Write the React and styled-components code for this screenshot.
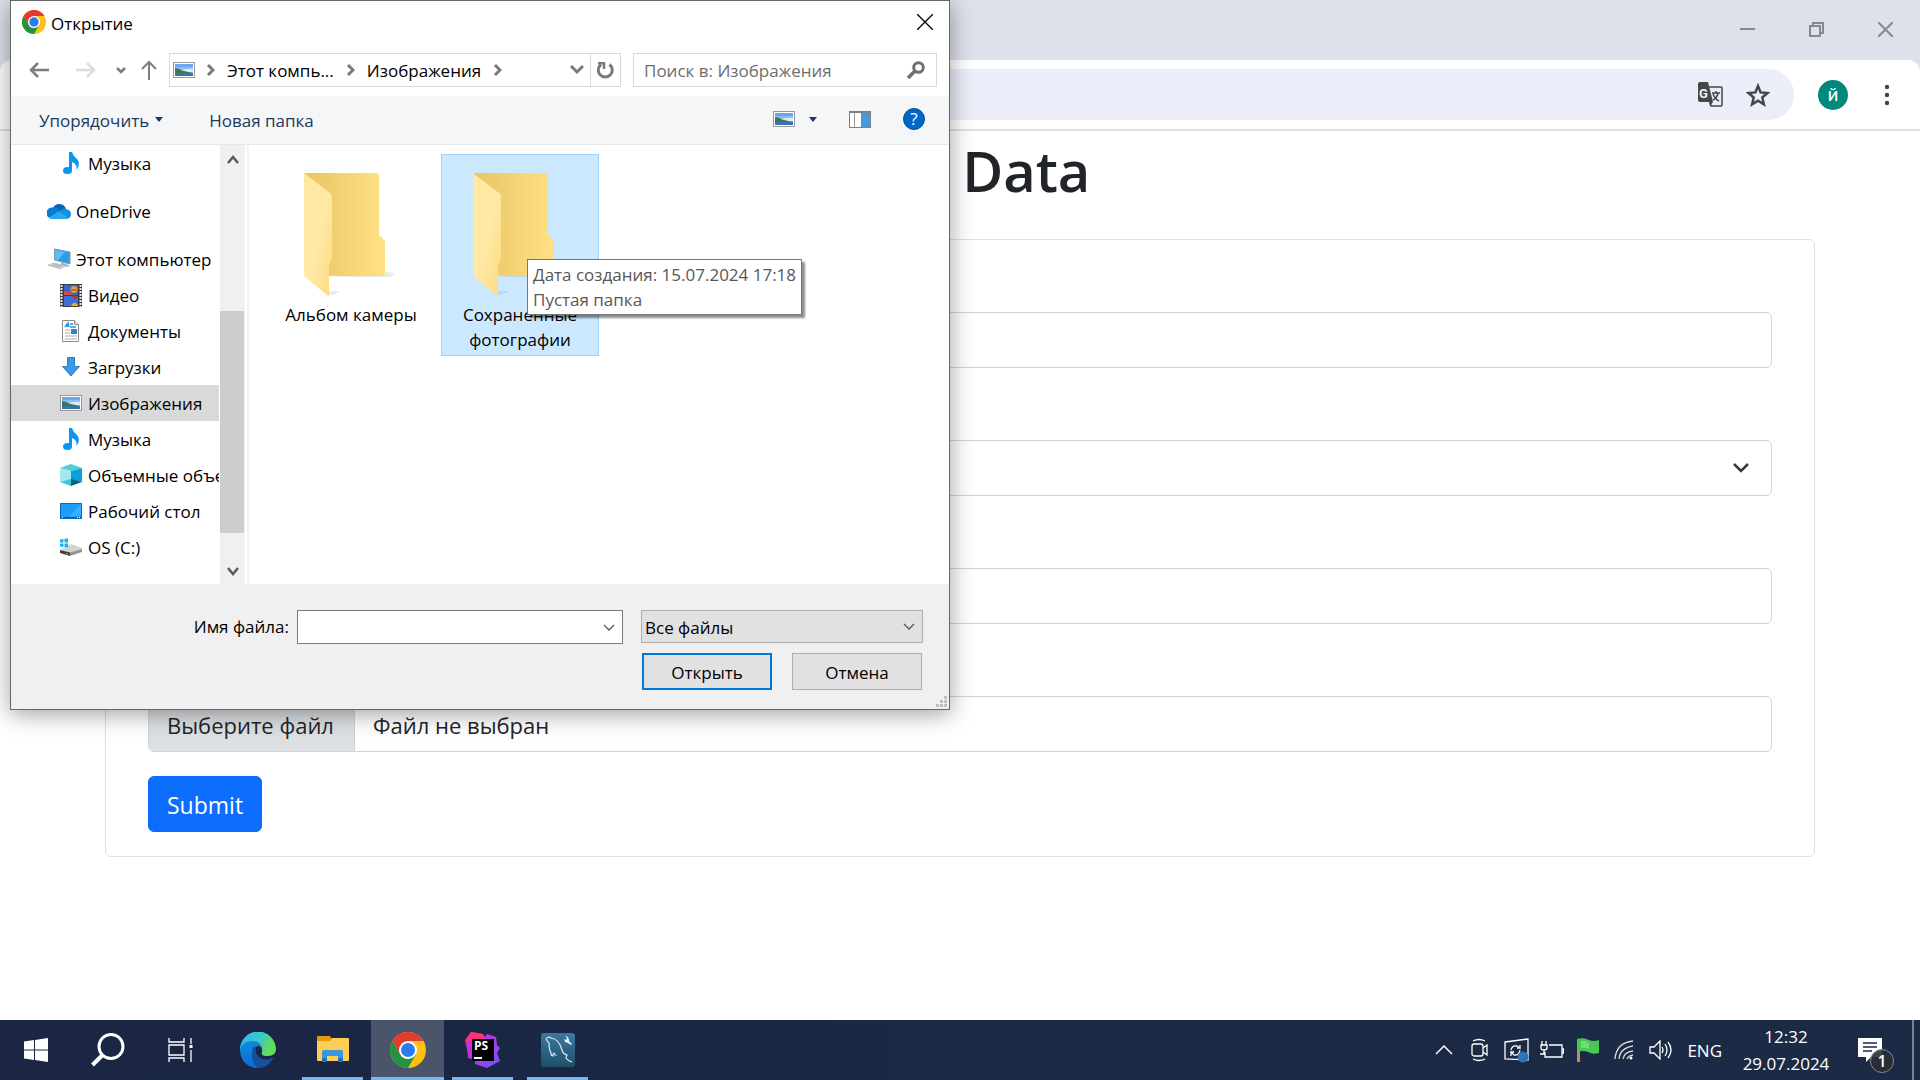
import React from "react";
import styled, { createGlobalStyle, css } from "styled-components";

const uiFont = `"Open Sans", "Noto Sans", sans-serif`;

const GlobalStyle = createGlobalStyle`
  *, *::before, *::after { box-sizing: border-box; }
  body { margin: 0; background: #fff; font-family: ${uiFont}; }
  button, input, select { font: inherit; color: inherit; margin: 0; }
  button { cursor: pointer; }
  svg { display: block; flex: none; }
`;

const plainButton = css`
  border: 0;
  padding: 0;
  background: none;
  display: flex;
  align-items: center;
  justify-content: center;
`;

const Desktop = styled.div`
  position: relative;
  display: flex;
  flex-direction: column;
  min-height: 100vh;
  overflow: hidden;
`;

/* ---------- browser ---------- */

const TabStrip = styled.header`
  height: 60px;
  display: flex;
  justify-content: flex-end;
  padding-bottom: 2px;
  background: #dee1e9;
`;

const WindowControl = styled.button`
  ${plainButton}
  width: 69px;
  color: #86888c;
`;

const ToolbarBack = styled.div`
  background: #dee1e9;
`;

const BrowserToolbar = styled.div`
  display: flex;
  align-items: center;
  gap: 24px;
  height: 71px;
  padding: 0 18px 0 240px;
  background: #fff;
  border-bottom: 2px solid #e0e1e2;
  border-radius: 12px 12px 0 0;
`;

const Omnibox = styled.div`
  flex: 1;
  height: 51px;
  display: flex;
  align-items: center;
  justify-content: flex-end;
  gap: 23px;
  padding-right: 24px;
  border-radius: 26px;
  background: #ebeef8;
`;

const IconButton = styled.button`
  ${plainButton}
  color: ${(p) => p.$color || "#444746"};
`;

const Avatar = styled.button`
  ${plainButton}
  width: 30px;
  height: 30px;
  border-radius: 50%;
  background: #00897b;
  color: #fff;
  font: 19px Roboto, sans-serif;
`;

const MenuButton = styled(IconButton)`
  width: 30px;
`;

const Page = styled.main`
  flex: 1;
  padding: 4px 105px 0;
  color: #212529;
`;

const PageTitle = styled.h1`
  margin: 0 0 34px;
  font-size: 56px;
  line-height: 70px;
  font-weight: 600;
  text-align: center;
`;

const Card = styled.form`
  display: flex;
  flex-direction: column;
  align-items: stretch;
  gap: 72px;
  padding: 72px 42px 24px;
  border: 1px solid #dfdfdf;
  border-radius: 6px;
  font-size: 23px;
`;

const FieldBox = styled.input`
  width: 100%;
  height: 56px;
  padding: 0 18px;
  border: 1px solid #ced4da;
  border-radius: 6px;
  background: #fff;
`;

const SelectWrap = styled.div`
  display: grid;
  align-items: center;
  & > * { grid-area: 1 / 1; }
  & > svg { justify-self: end; margin-right: ${(p) => p.$inset}px; pointer-events: none; }
`;

const FieldSelect = styled(FieldBox).attrs({ as: "select" })`
  appearance: none;
`;

const FileField = styled.label`
  display: flex;
  height: 56px;
  overflow: hidden;
  border: 1px solid #ced4da;
  border-radius: 6px;
  font-size: 22px;
`;

const HiddenFile = styled.input`
  width: 0;
  height: 0;
  opacity: 0;
  padding: 0;
  border: 0;
`;

const FileButton = styled.span`
  padding: 3px 20px 0 18px;
  border-right: 1px solid #ced4da;
  background: #dde0e3;
  line-height: 51px;
`;

const FileStatus = styled.span`
  padding: 3px 18px 0;
  line-height: 51px;
`;

const Submit = styled.button`
  align-self: flex-start;
  height: 56px;
  margin-top: -48px;
  padding: 2px 18px 0;
  border: 1px solid #0d6efd;
  border-radius: 6px;
  background: #0d6efd;
  color: #fff;
`;

/* ---------- file dialog ---------- */

const Dialog = styled.section`
  position: absolute;
  left: 10px;
  top: 0;
  width: 940px;
  display: flex;
  flex-direction: column;
  border: 1px solid #646668;
  background: #fff;
  color: #000;
  font-size: 17px;
  box-shadow: 0 4px 22px rgba(0, 0, 0, 0.38);
`;

const TitleBar = styled.div`
  display: flex;
  align-items: center;
  gap: 5px;
  height: 45px;
  padding: 0 16px 3px 11px;
`;

const DialogTitle = styled.h2`
  flex: 1;
  margin: 0;
  padding-top: 3px;
  font-size: 17px;
  font-weight: 400;
  line-height: 24px;
`;

const NavBar = styled.div`
  display: flex;
  align-items: center;
  height: 50px;
  padding: 0 12px 2px 18px;
`;

const NavButtons = styled.div`
  display: flex;
  align-items: center;
  width: 140px;
  justify-content: space-between;
  padding-right: 12px;
`;

const AddressBar = styled.div`
  display: flex;
  align-items: center;
  width: 452px;
  height: 34px;
  padding-left: 3px;
  border: 1px solid #d9d9d9;
`;

const Crumb = styled.button`
  ${plainButton}
  padding: 1px 12px 0;
`;

const Chevron = styled.span`
  display: flex;
  margin-left: ${(p) => p.$space || 0}px;
`;

const AddressEnd = styled.div`
  display: flex;
  align-self: stretch;
  align-items: center;
  margin-left: auto;
`;

const Refresh = styled.button`
  ${plainButton}
  align-self: stretch;
  width: 30px;
  margin-left: 6px;
  border-left: 1px solid #d9d9d9;
`;

const SearchBox = styled.label`
  flex: 1;
  display: flex;
  align-items: center;
  height: 34px;
  margin-left: 12px;
  padding: 0 11px 0 10px;
  border: 1px solid #d9d9d9;
`;

const SearchInput = styled.input`
  flex: 1;
  min-width: 0;
  border: 0;
  padding: 1px 0 0;
  outline: 0;
  background: none;
  &::placeholder { color: #6d6d6d; opacity: 1; }
`;

const CommandBar = styled.div`
  display: flex;
  align-items: center;
  height: 49px;
  padding: 0 24px 2px 28px;
  background: #f4f6f8;
  border-bottom: 1px solid #e6e8ea;
  color: #1e395b;
`;

const Command = styled.button`
  ${plainButton}
  gap: 6px;
  margin-right: 46px;
  & > span { padding-top: 2px; }
`;

const CommandIcons = styled.div`
  display: flex;
  align-items: center;
  gap: 32px;
  margin-left: auto;
`;

const ViewButton = styled.button`
  ${plainButton}
  gap: 14px;
`;

const Help = styled.button`
  ${plainButton}
  width: 22px;
  height: 22px;
  border: 1px solid #0a4b91;
  border-radius: 50%;
  background: #0067c8;
  color: #fff;
  font-size: 17px;
  line-height: 20px;
`;

const Browse = styled.div`
  display: flex;
  height: 439px;
`;

const Tree = styled.ul`
  width: 208px;
  margin: 0;
  padding: 0;
  overflow: hidden;
  list-style: none;
`;

const TreeItem = styled.li`
  margin-top: ${(p) => (p.$spaced ? 12 : 0)}px;
`;

const TreeButton = styled.button`
  ${plainButton}
  justify-content: flex-start;
  width: 208px;
  height: 36px;
  gap: ${(p) => (p.$root ? 5 : 6)}px;
  padding-left: ${(p) => (p.$root ? 36 : 49)}px;
  background: ${(p) => (p.$selected ? "#d9d9d9" : "transparent")};
  white-space: nowrap;
`;

const ScrollBar = styled.div`
  display: flex;
  flex-direction: column;
  align-items: center;
  justify-content: space-between;
  width: 25px;
  margin-left: 1px;
  padding: 10px 0 8px;
  background: #f0f0f0;
`;

const ScrollThumb = styled.div`
  align-self: stretch;
  height: 222px;
  margin: 112px 1px 0 0;
  background: #cdcdcd;
`;

const FileArea = styled.div`
  flex: 1;
  display: flex;
  align-items: flex-start;
  gap: 11px;
  margin-left: 2px;
  padding: 9px 23px;
  border-left: 2px solid #f2f2f2;
`;

const FileTile = styled.button`
  ${plainButton}
  flex-direction: column;
  width: 158px;
  height: 202px;
  justify-content: flex-start;
  padding: 17px 8px 0;
  border: 1px solid ${(p) => (p.$selected ? "#99d1ff" : "transparent")};
  background: ${(p) => (p.$selected ? "#cce8ff" : "transparent")};
  line-height: 25px;
`;

const Tooltip = styled.div`
  position: absolute;
  left: 516px;
  top: 258px;
  padding: 2px 5px;
  border: 1px solid #767676;
  background: #fff;
  box-shadow: 3px 3px 2px rgba(0, 0, 0, 0.45);
  color: #575757;
  line-height: 25px;
  white-space: nowrap;
`;

const DialogFooter = styled.div`
  position: relative;
  display: grid;
  grid-template-columns: 278px 326px 282px;
  column-gap: 8px;
  row-gap: 9px;
  align-items: start;
  align-content: start;
  height: 125px;
  padding-top: 26px;
  background: #f0f0f0;
`;

const FileNameLabel = styled.label`
  line-height: 34px;
  text-align: right;
`;

const FileName = styled.input`
  height: 34px;
  width: 100%;
  border: 1px solid #7a7a7a;
  background: #fff;
  padding: 0 28px 0 4px;
`;

const TypeCell = styled(SelectWrap)`
  margin-left: 10px;
  width: 282px;
`;

const FileType = styled.select`
  appearance: none;
  height: 33px;
  padding: 1px 28px 0 3px;
  border: 1px solid #adadad;
  border-radius: 0;
  background: #e1e1e1;
`;

const Actions = styled.div`
  grid-column: 3;
  display: flex;
  gap: 20px;
  width: 282px;
  margin-left: 11px;
`;

const ActionButton = styled.button`
  width: 130px;
  height: 37px;
  padding: 1px 0 0;
  border: ${(p) => (p.$primary ? "2px solid #0078d7" : "1px solid #adadad")};
  background: #e1e1e1;
`;

const Grip = styled.svg`
  position: absolute;
  right: 2px;
  bottom: 2px;
`;

/* ---------- taskbar ---------- */

const Taskbar = styled.footer`
  display: flex;
  height: 60px;
  background: linear-gradient(90deg, #1a2644, #1c2b45);
  color: #fff;
`;

const SystemButton = styled.button`
  ${plainButton}
  width: 72px;
`;

const AppButtons = styled.div`
  display: flex;
  gap: 2px;
  margin-left: 5px;
`;

const AppButton = styled.button`
  ${plainButton}
  flex-direction: column;
  width: 73px;
  background: ${(p) => (p.$state === "active" ? "#4a546b" : "transparent")};
  & > span {
    flex: 1;
    display: flex;
    align-items: center;
    padding-top: 2px;
  }
  &::after {
    content: "";
    height: 3px;
    width: ${(p) => ({ active: 73, open: 61 })[p.$state] || 0}px;
    background: #76b9ed;
  }
`;

const Tray = styled.div`
  display: flex;
  align-items: center;
  margin-left: auto;
`;

const TrayIcons = styled.div`
  display: flex;
  align-items: center;
  gap: 12px;
  margin-right: 15px;
`;

const TrayButton = styled.button`
  ${plainButton}
  width: 24px;
  height: 32px;
`;

const Language = styled.button`
  ${plainButton}
  font-size: 17px;
`;

const Clock = styled.time`
  width: 128px;
  font-size: 17px;
  line-height: 27px;
  text-align: center;
`;

const Notifications = styled.button`
  ${plainButton}
  position: relative;
  width: 24px;
  height: 40px;
  margin: 0 30px 0 8px;
`;

const Badge = styled.span`
  position: absolute;
  left: 12px;
  top: 19px;
  width: 24px;
  height: 24px;
  border: 1px solid #85898f;
  border-radius: 50%;
  background: rgba(43, 46, 53, 0.9);
  font-size: 16px;
  font-weight: 600;
  line-height: 22px;
`;

const ShowDesktop = styled.button`
  ${plainButton}
  align-self: stretch;
  width: 8px;
  border-left: 2px solid #79828f;
`;

/* ---------- icons ---------- */

const ChromeIcon = ({ size }) => (
  <svg width={size} height={size} viewBox="0 0 36 36">
    <circle cx="18" cy="18" r="18" fill="#fbc116" />
    <path d="M18 18 2.400 9A18 18 0 0 1 33.600 9H18Z" fill="#e33b2e" />
    <path d="M2.400 9 10.200 22.500 18 18V9Z" fill="#e33b2e" />
    <path d="M2.400 9 10.200 22.500A9 9 0 0 0 18 27L25.800 22.500 18 36A18 18 0 0 1 2.400 9Z" fill="#229342" />
    <circle cx="18" cy="18" r="9" fill="#fff" />
    <circle cx="18" cy="18" r="7" fill="#2b7bee" />
  </svg>
);

const PictureIcon = () => (
  <svg width="22" height="16" viewBox="0 0 22 16">
    <rect x=".5" y=".5" width="21" height="15" fill="#fff" stroke="#9a9a9a" />
    <rect x="2" y="2" width="18" height="12" fill="#8fbdf3" />
    <rect x="2" y="2" width="18" height="3" fill="#6ea5ee" />
    <path d="M7 9q6-3 13-2v3H7Z" fill="#dcecf7" />
    <path d="M2 6q4 0 7 2.500 5 1 11 2.500H2Z" fill="#3f7455" />
    <rect x="2" y="11" width="18" height="3" fill="#3b73a6" />
  </svg>
);

const MusicIcon = () => (
  <svg width="22" height="24" viewBox="0 0 22 24">
    <ellipse cx="7.500" cy="19.500" rx="4.500" ry="3.500" fill="#0a95f2" />
    <path d="M9 1h3q1 4 5 7 4 5-.5 11 1-6-4.500-8v8l-3 1Z" fill="#0a95f2" />
  </svg>
);

const CloudIcon = () => (
  <svg width="24" height="16" viewBox="0 0 24 16">
    <path d="M6 5a7 7 0 0 1 13 1l-7 6-6-3Z" fill="#0862b8" />
    <path d="M6 4.500q4-1 7 2L4 15.500A5.500 5.500 0 0 1 6 4.500Z" fill="#0c78d4" />
    <path d="M13 7.500q3-3 6-1.500 5 1 5 5t-4 5H12Z" fill="#1590df" />
    <path d="M2 14.500 12 8l9 7q-1 1-3 1H5q-2 0-3-1.500Z" fill="#2aa8ee" />
  </svg>
);

const ComputerIcon = () => (
  <svg width="24" height="22" viewBox="0 0 24 22">
    <path d="M7.500 1 23 4v12L7.500 12Z" fill="#2f9ce6" stroke="#8299aa" />
    <path d="M8 2l10 2-7 8-3-.5Z" fill="#56c0f7" />
    <path d="M14 14v3l6 2 3-1-4-2Z" fill="#a9b4bd" />
    <path d="M1 17l6-2 11 3-5 3Z" fill="#d5dbe0" stroke="#a9b4bd" strokeWidth=".7" />
    <path d="M4 17l9 2M7 16l8 2" stroke="#8f9aa3" strokeWidth=".7" />
  </svg>
);

const VideoIcon = () => (
  <svg width="22" height="23" viewBox="0 0 22 23">
    <rect width="22" height="23" fill="#3c3c3c" />
    <path d="M1.500 1v22M20.500 1v22" stroke="#e8e8e8" strokeWidth="2" strokeDasharray="2 1" />
    <rect x="4" y="1" width="14" height="10" fill="#3b63d6" />
    <rect x="4" y="12" width="14" height="10" fill="#3b6fe0" />
    <path d="M4 8q4-2 6 1l2 2H4Z" fill="#e04a3a" />
    <circle cx="14" cy="5.500" r="3.500" fill="#e3a625" />
    <path d="M11 6h6M12 12h5l-2 3Z" stroke="#a1342a" fill="#d93a2d" strokeWidth="1" />
    <path d="M11 22q3-6 7-1v1Z" fill="#e3b625" />
  </svg>
);

const DocumentIcon = () => (
  <svg width="22" height="24" viewBox="0 0 22 24">
    <path d="M2.500 1.500h12l4 4v17h-16Z" fill="#fff" stroke="#8c8c8c" />
    <path d="M14.500 1.500v4h4" fill="#e8e8e8" stroke="#8c8c8c" />
    <path d="M5 8l3-4 1 4M6 7h3M10 5h3M10 8h6" stroke="#2492d8" fill="none" strokeWidth="1.500" />
    <path d="M5 11h5M5 14h5M5 17h12M5 20h12" stroke="#a8a8a8" />
    <rect x="11" y="10" width="6" height="5" fill="#3a7fc0" />
  </svg>
);

const DownloadIcon = () => (
  <svg width="22" height="20" viewBox="0 0 22 20">
    <path d="M7.500.5h7v9h5L11 19 2.500 9.500h5Z" fill="#3c99e8" stroke="#2f7fc6" />
  </svg>
);

const CubeIcon = () => (
  <svg width="22" height="22" viewBox="0 0 22 22">
    <path d="M0 4 11 0l11 4-11 3Z" fill="#51cdd8" />
    <path d="M0 4l11 3v9L0 18Z" fill="#a4e7ec" />
    <path d="M22 4 11 7v9l11 2Z" fill="#0aa2dc" />
    <path d="M0 18l11-3v7Z" fill="#3ec6d8" />
    <path d="M22 18l-11-3v7Z" fill="#08607a" />
  </svg>
);

const DesktopIcon = () => (
  <svg width="22" height="16" viewBox="0 0 22 16">
    <rect x=".5" y=".5" width="21" height="15" fill="#1c9dfb" stroke="#0d6cb0" />
    <path d="M21 1v11L9 14Z" fill="#3bb0ff" />
    <path d="M1 14.500h20" stroke="#0b5c9b" />
    <path d="M2 14.500h1M17 14.500h3" stroke="#fff" strokeDasharray="1 1" />
  </svg>
);

const DriveIcon = () => (
  <svg width="22" height="18" viewBox="0 0 22 18">
    <path d="M0 12l11-6 11 4v2l-12 3Z" fill="#d3d3d3" />
    <path d="M0 12l10 2.500V18L0 15Z" fill="#3f3f3f" />
    <path d="M10 14.500 22 11v3l-12 4Z" fill="#969696" />
    <path d="M6 15.500l2 .5" stroke="#5fd36a" />
    <path d="M0 1.500 3.500 1v3.500H0ZM4.500.8 8 .4v4.100H4.500ZM0 5.500h3.500V9L0 8.500ZM4.500 5.500H8v4l-3.500-.4Z" fill="#12b3f2" />
  </svg>
);

const FolderIcon = ({ id }) => (
  <svg width="94" height="130" viewBox="0 0 94 130">
    <defs>
      <linearGradient id={`${id}back`}>
        <stop offset="0" stopColor="#e8c464" />
        <stop offset="1" stopColor="#ffe184" />
      </linearGradient>
      <linearGradient id={`${id}front`} x2="1" y2="1">
        <stop offset="0" stopColor="#ffe8a0" />
        <stop offset=".5" stopColor="#ffe9a6" />
        <stop offset="1" stopColor="#fddc80" />
      </linearGradient>
    </defs>
    <path d="M27 105h60q4-3 3-4l-12-2ZM23 123q9 0 13-4H25Z" fill="#000" opacity=".08" />
    <path d="M0 1h73q2 0 2 2v60l6 6v33q0 2-2 2H24Z" fill={`url(#${id}back)`} />
    <path d="M0 1l26 20q2 1 2 4v61l-3 6v31q0 1-1 1L0 104Z" fill={`url(#${id}front)`} />
  </svg>
);

const SmallChevron = ({ d = "M2 1l5 5-5 5", width = 9, height = 12, stroke = "#7a7a7a", sw = 3 }) => (
  <svg width={width} height={height} viewBox={`0 0 ${width} ${height}`} fill="none" stroke={stroke} strokeWidth={sw}>
    <path d={d} />
  </svg>
);

const ThinDown = () => (
  <SmallChevron d="M1 2l5 5 5-5" width={12} height={9} stroke="#555" sw={1.3} />
);

const Triangle = () => (
  <svg width="8" height="5" viewBox="0 0 8 5"><path d="M0 0h8L4 5Z" fill="#1e395b" /></svg>
);

const Arrow = ({ color, flip }) => (
  <svg width="20" height="18" viewBox="0 0 20 18" fill="none" stroke={color} strokeWidth="2.500">
    <path d={flip ? "M0 9h18M11 2l7 7-7 7" : "M20 9H2M9 2 2 9l7 7"} />
  </svg>
);

const EdgeIcon = () => (
  <svg width="36" height="36" viewBox="0 0 36 36">
    <defs>
      <linearGradient id="edgeTop" x2="1" y2=".4">
        <stop offset="0" stopColor="#2fb4f0" />
        <stop offset=".5" stopColor="#35c6d6" />
        <stop offset="1" stopColor="#63dd58" />
      </linearGradient>
      <linearGradient id="edgeLeft" x2=".3" y2="1">
        <stop offset="0" stopColor="#0f8ce0" />
        <stop offset="1" stopColor="#0a6fd0" />
      </linearGradient>
    </defs>
    <path d="M0 18A18 18 0 0 1 36 17q0 7-8 7-8 0-6-4 1-7-6-9Q6 8 0 18Z" fill="url(#edgeTop)" />
    <path d="M0 18Q2 9 12 9q9 0 10 8-1-3-4-3-6 1-6 8 0 9 10 13Q18 36 15 36 1 33 0 18Z" fill="url(#edgeLeft)" />
    <path d="M12 20q0-5 5-6-3 5 1 10 6 6 14 2 2-1 1 1-6 9-15 9Q11 31 12 20Z" fill="#13519c" />
  </svg>
);

const ExplorerIcon = () => (
  <svg width="32" height="27" viewBox="0 0 32 27">
    <path d="M0 1q0-1 1-1h12l2 3-2 3H0Z" fill="#e09a0c" />
    <path d="M0 5h13l2-3h16q1 0 1 1v21q0 1-1 1H1q-1 0-1-1Z" fill="#fdcd55" />
    <path d="M5 16q0-2 2-2h17q2 0 2 2v10h-5v-6H10v6H5Z" fill="#3a96dd" />
    <path d="M5 22h5v4H5ZM21 22h5v4h-5Z" fill="#1d76bd" />
  </svg>
);

const PhpStormIcon = () => (
  <svg width="36" height="36" viewBox="0 0 36 36">
    <defs>
      <linearGradient id="storm" x2="1" y2="1">
        <stop offset="0" stopColor="#ff2f86" />
        <stop offset=".3" stopColor="#c333e0" />
        <stop offset="1" stopColor="#6b57ff" />
      </linearGradient>
    </defs>
    <path d="M0 8 6 0l12 2 2 3 2-3 9 3 1 8 3 3-3 5 3 8-13 7-12-4v-5l-6-1Z" fill="url(#storm)" />
    <path d="M6 0l12 2 1 6H7l-5 4-1-4Z" fill="#fb3377" />
    <path d="M2 9h5v18l-4-1Z" fill="#c92fd8" />
    <rect x="7" y="7" width="22" height="22" fill="#000" />
    <rect x="9" y="25" width="8" height="2" fill="#fff" />
    <text x="9" y="18" fill="#fff" fontSize="12" fontWeight="700" fontFamily="Open Sans, sans-serif">PS</text>
  </svg>
);

const WorkbenchIcon = () => (
  <svg width="34" height="34" viewBox="0 0 34 34" fill="none">
    <defs>
      <linearGradient id="bench" y2="1" x2="0">
        <stop offset="0" stopColor="#3a78a0" />
        <stop offset="1" stopColor="#1f5068" />
      </linearGradient>
    </defs>
    <rect width="34" height="34" rx="3" fill="url(#bench)" />
    <path d="M5 6q2-3 5-1 8 1 11 12 1 4 5 5-1 2-1 3 2 3 6 4M5 6q1 2 3 4 0 7 2 10 0 3 2 3 0-3 1-3 2 3 2 2" stroke="#dcebf3" strokeWidth="1.200" />
    <path d="M24 3l2 2-1 2-2-1 1 3 3 1 3 2 1-1-3-3q0-5-4-5Z" fill="#e6f1f6" />
  </svg>
);

const treeItems = [
  { label: "Музыка", icon: <MusicIcon /> },
  { label: "OneDrive", icon: <CloudIcon />, root: true },
  { label: "Этот компьютер", icon: <ComputerIcon />, root: true },
  { label: "Видео", icon: <VideoIcon /> },
  { label: "Документы", icon: <DocumentIcon /> },
  { label: "Загрузки", icon: <DownloadIcon /> },
  { label: "Изображения", icon: <PictureIcon />, selected: true },
  { label: "Музыка", icon: <MusicIcon /> },
  { label: "Объемные объекты", icon: <CubeIcon /> },
  { label: "Рабочий стол", icon: <DesktopIcon /> },
  { label: "OS (C:)", icon: <DriveIcon /> },
];

function BrowserWindow() {
  return (
    <>
      <TabStrip>
        <WindowControl aria-label="Minimize">
          <svg width="15" height="15" viewBox="0 0 15 15"><path d="M0 7h15" stroke="currentColor" strokeWidth="2" /></svg>
        </WindowControl>
        <WindowControl aria-label="Restore">
          <svg width="15" height="15" viewBox="0 0 15 15" fill="none" stroke="currentColor" strokeWidth="2">
            <path d="M1 4h10v10H1ZM4 4V1h10v10h-3" />
          </svg>
        </WindowControl>
        <WindowControl aria-label="Close window">
          <svg width="15" height="15" viewBox="0 0 15 15"><path d="M0 0l15 15M15 0 0 15" stroke="currentColor" strokeWidth="2" /></svg>
        </WindowControl>
      </TabStrip>
      <ToolbarBack>
        <BrowserToolbar>
          <Omnibox>
            <IconButton aria-label="Translate">
              <svg width="25" height="25" viewBox="0 0 25 25">
                <path d="M10 5h13q1 0 1 1v17q0 1-1 1H13l-1-4" fill="none" stroke="#444746" strokeWidth="1.500" />
                <path d="M2 0h8l5 20H2q-2 0-2-2V2q0-2 2-2ZM11 20h4l-3 4Z" fill="#444746" />
                <path d="M14 11h8M18 9v2M20 11q-1 5-5 7M15 12q2 5 6 7" fill="none" stroke="#444746" strokeWidth="1.500" />
                <text x="1" y="16" fill="#ebeef8" fontSize="13" fontWeight="700" fontFamily="Roboto, sans-serif">G</text>
              </svg>
            </IconButton>
            <IconButton aria-label="Bookmark">
              <svg width="24" height="24" viewBox="0 0 24 24" fill="none" stroke="currentColor" strokeWidth="2.500">
                <path d="M12 3l2.600 6.400 6.900.6-5.200 4.500 1.600 6.800L12 17.700l-5.900 3.600 1.600-6.800L2.500 10l6.900-.6Z" />
              </svg>
            </IconButton>
          </Omnibox>
          <Avatar aria-label="Profile">й</Avatar>
          <MenuButton aria-label="Menu">
            <svg width="6" height="22" viewBox="0 0 6 22" fill="currentColor">
              <circle cx="3" cy="3" r="2.200" /><circle cx="3" cy="11" r="2.200" /><circle cx="3" cy="19" r="2.200" />
            </svg>
          </MenuButton>
        </BrowserToolbar>
      </ToolbarBack>
      <Page>
        <PageTitle>Post Data</PageTitle>
        <Card onSubmit={(e) => e.preventDefault()}>
          <FieldBox aria-label="Name" />
          <SelectWrap $inset={23}>
            <FieldSelect aria-label="Category" />
            <SmallChevron d="M1 1l7 7 7-7" width={16} height={11} stroke="#343a40" sw={2.5} />
          </SelectWrap>
          <FieldBox aria-label="Price" />
          <FileField>
            <FileButton>Выберите файл</FileButton>
            <FileStatus>Файл не выбран</FileStatus>
            <HiddenFile type="file" />
          </FileField>
          <Submit>Submit</Submit>
        </Card>
      </Page>
    </>
  );
}

function FileDialog() {
  return (
    <Dialog role="dialog" aria-label="Открытие">
      <TitleBar>
        <ChromeIcon size={24} />
        <DialogTitle>Открытие</DialogTitle>
        <IconButton $color="#000" aria-label="Close">
          <svg width="16" height="16" viewBox="0 0 16 16"><path d="M0 0l16 16M16 0 0 16" stroke="currentColor" strokeWidth="1.300" /></svg>
        </IconButton>
      </TitleBar>
      <NavBar>
        <NavButtons>
          <IconButton aria-label="Back"><Arrow color="#7d7d7d" /></IconButton>
          <Chevron $space={12}><IconButton aria-label="Forward"><Arrow color="#dcdcdc" flip /></IconButton></Chevron>
          <Chevron $space={4}>
            <IconButton aria-label="Recent">
              <SmallChevron d="M1 1l4 4 4-4" width={10} height={7} sw={2.5} />
            </IconButton>
          </Chevron>
          <IconButton aria-label="Up">
            <svg width="16" height="20" viewBox="0 0 16 20" fill="none" stroke="#7d7d7d" strokeWidth="2"><path d="M8 20V2M1 9l7-7 7 7" /></svg>
          </IconButton>
        </NavButtons>
        <AddressBar>
          <PictureIcon />
          <Chevron $space={11}><SmallChevron /></Chevron>
          <Crumb>Этот компь...</Crumb>
          <SmallChevron />
          <Crumb>Изображения</Crumb>
          <SmallChevron />
          <AddressEnd>
            <SmallChevron d="M1 1l6 6 6-6" width={14} height={10} sw={3} />
            <Refresh aria-label="Refresh">
              <svg width="17" height="17" viewBox="0 0 17 17" fill="none" stroke="#7a7a7a" strokeWidth="3">
                <path d="M12.500 2.500a7 7 0 1 1-8.500 0" /><path d="M1 1.200h6V7" strokeWidth="2.500" />
              </svg>
            </Refresh>
          </AddressEnd>
        </AddressBar>
        <SearchBox>
          <SearchInput placeholder="Поиск в: Изображения" />
          <svg width="18" height="18" viewBox="0 0 18 18" fill="none" stroke="#6f6f6f">
            <circle cx="11.500" cy="6.500" r="4.800" strokeWidth="3" /><path d="M1 17l7-7" strokeWidth="3.500" />
          </svg>
        </SearchBox>
      </NavBar>
      <CommandBar>
        <Command><span>Упорядочить</span><Triangle /></Command>
        <Command><span>Новая папка</span></Command>
        <CommandIcons>
          <ViewButton aria-label="View"><PictureIcon /><Triangle /></ViewButton>
          <IconButton aria-label="Preview pane">
            <svg width="22" height="17" viewBox="0 0 22 17">
              <rect x=".5" y=".5" width="21" height="16" fill="#fff" stroke="#7f7f7f" />
              <path d="M0 1h22" stroke="#7f7f7f" strokeWidth="2" />
              <path d="M5.500 2v14" stroke="#9d9d9d" />
              <rect x="12" y="2" width="9" height="14" fill="#4199e1" />
            </svg>
          </IconButton>
          <Help aria-label="Help">?</Help>
        </CommandIcons>
      </CommandBar>
      <Browse>
        <Tree>
          {treeItems.map((item, i) => (
            <TreeItem key={i} $spaced={item.root}>
              <TreeButton $root={item.root} $selected={item.selected}>
                {item.icon}
                <span>{item.label}</span>
              </TreeButton>
            </TreeItem>
          ))}
        </Tree>
        <ScrollBar>
          <SmallChevron d="M1 8l5-6 5 6" width={12} height={9} stroke="#5a5a5a" sw={2.5} />
          <ScrollThumb />
          <SmallChevron d="M1 1l5 6 5-6" width={12} height={9} stroke="#5a5a5a" sw={2.5} />
        </ScrollBar>
        <FileArea>
          <FileTile><FolderIcon id="camera" />Альбом камеры</FileTile>
          <FileTile $selected><FolderIcon id="saved" />Сохраненные фотографии</FileTile>
        </FileArea>
      </Browse>
      <DialogFooter>
        <FileNameLabel htmlFor="file-name">Имя файла:</FileNameLabel>
        <SelectWrap $inset={8}>
          <FileName id="file-name" />
          <ThinDown />
        </SelectWrap>
        <TypeCell $inset={8}>
          <FileType aria-label="Тип файлов"><option>Все файлы</option></FileType>
          <ThinDown />
        </TypeCell>
        <Actions>
          <ActionButton $primary>Открыть</ActionButton>
          <ActionButton>Отмена</ActionButton>
        </Actions>
        <Grip width="11" height="11" viewBox="0 0 11 11" fill="#bfbfbf">
          <path d="M8 0h3v3H8ZM8 4h3v3H8ZM8 8h3v3H8ZM4 4h3v3H4ZM4 8h3v3H4ZM0 8h3v3H0Z" />
        </Grip>
      </DialogFooter>
      <Tooltip role="tooltip">
        <div>Дата создания: 15.07.2024 17:18</div>
        <div>Пустая папка</div>
      </Tooltip>
    </Dialog>
  );
}

function SystemTaskbar() {
  return (
    <Taskbar>
      <SystemButton aria-label="Start">
        <svg width="24" height="24" viewBox="0 0 24 24" fill="#fff">
          <path d="M0 3.500l10-1.400v9.400H0ZM11 2l13-2v11.500H11ZM0 12.500h10v9.400L0 20.500ZM11 12.500h13V24l-13-2Z" />
        </svg>
      </SystemButton>
      <SystemButton aria-label="Search">
        <svg width="34" height="34" viewBox="0 0 34 34" fill="none" stroke="#fff" strokeWidth="3">
          <circle cx="20" cy="13.500" r="12" /><path d="M11.500 22 1.500 32" strokeWidth="4" />
        </svg>
      </SystemButton>
      <SystemButton aria-label="Task view">
        <svg width="25" height="24" viewBox="0 0 25 24" fill="none" stroke="#fff" strokeWidth="1.300">
          <path d="M1 0v4h15V0M1 7h15v10H1ZM1 24v-4h15v4M23 0v6M23 12v12" /><path d="M21.500 7h3v3h-3Z" fill="#fff" stroke="none" />
        </svg>
      </SystemButton>
      <AppButtons>
        <AppButton aria-label="Edge"><span><EdgeIcon /></span></AppButton>
        <AppButton $state="open" aria-label="Explorer"><span><ExplorerIcon /></span></AppButton>
        <AppButton $state="active" aria-label="Chrome"><span><ChromeIcon size={36} /></span></AppButton>
        <AppButton $state="open" aria-label="PhpStorm"><span><PhpStormIcon /></span></AppButton>
        <AppButton $state="open" aria-label="MySQL Workbench"><span><WorkbenchIcon /></span></AppButton>
      </AppButtons>
      <Tray>
        <TrayIcons>
          <TrayButton aria-label="Hidden icons">
            <SmallChevron d="M1 10l8-8 8 8" width={18} height={12} stroke="#fff" sw={1.5} />
          </TrayButton>
          <TrayButton aria-label="Camera">
            <svg width="18" height="24" viewBox="0 0 18 24" fill="none" stroke="#fff" strokeWidth="1.300">
              <rect x="1" y="6" width="11" height="12" rx="2" /><path d="M12 10l4-3v10l-4-3M2 3q6-3 12 0M2 21q6 3 12 0" />
            </svg>
          </TrayButton>
          <TrayButton aria-label="Updates">
            <svg width="25" height="25" viewBox="0 0 25 25" fill="none" stroke="#fff" strokeWidth="1.300">
              <path d="M1 4l23-3v21L1 21Z" /><path d="M7 12q1-5 6-4l3 2V7M16 10h-3M16 12q-1 6-6 5l-3-3v4M7 14h3" />
              <circle cx="19" cy="19" r="5.500" fill="#2f73b8" stroke="none" />
            </svg>
          </TrayButton>
          <TrayButton aria-label="Battery">
            <svg width="24" height="18" viewBox="0 0 24 18" fill="none" stroke="#fff" strokeWidth="1.300">
              <path d="M9 4h13v12H5v-5M22 8h1.500v4H22M2 0v4M6 0v4M1 4h6v3q0 2-3 2-3 0-3-2ZM4 9v4H0" />
            </svg>
          </TrayButton>
          <TrayButton aria-label="Flag">
            <svg width="24" height="24" viewBox="0 0 24 24">
              <path d="M1 2h3v22H1Z" fill="#c98850" />
              <path d="M1 1q7-2 12 1 5 2 10 0v13q-6 2-11-1-5-2-11 0Z" fill="#49c653" />
              <path d="M5 3q5-1 8 2v6q-4-2-8-1Z" fill="#72dc76" />
            </svg>
          </TrayButton>
          <TrayButton aria-label="Wi-Fi">
            <svg width="20" height="20" viewBox="0 0 20 20" fill="none" stroke="#d5dae0" strokeWidth="1.300">
              <path d="M1 19Q2 3 19 1M5 19Q6 8 19 6M9 19q1-7 10-8M13 19q1-3 6-4" /><circle cx="17" cy="18" r="1.500" fill="#fff" stroke="none" />
            </svg>
          </TrayButton>
          <TrayButton aria-label="Volume">
            <svg width="23" height="20" viewBox="0 0 23 20" fill="none" stroke="#fff" strokeWidth="1.300">
              <path d="M1 7h4l6-6v18l-6-6H1ZM13 7q2 3 0 6M16 4q4 6 0 12M19 2q6 8 0 16" />
            </svg>
          </TrayButton>
        </TrayIcons>
        <Language>ENG</Language>
        <Clock>12:32<br />29.07.2024</Clock>
        <Notifications aria-label="Notifications">
          <svg width="24" height="24" viewBox="0 0 24 24">
            <path d="M0 0h24v19H13l-5 5v-5H0Z" fill="#fff" /><path d="M5 5h14M5 9h14M5 13h9" stroke="#1c2a44" strokeWidth="1.300" />
          </svg>
          <Badge>1</Badge>
        </Notifications>
        <ShowDesktop aria-label="Show desktop" />
      </Tray>
    </Taskbar>
  );
}

export default function App() {
  return (
    <>
      <GlobalStyle />
      <Desktop>
        <BrowserWindow />
        <SystemTaskbar />
        <FileDialog />
      </Desktop>
    </>
  );
}
